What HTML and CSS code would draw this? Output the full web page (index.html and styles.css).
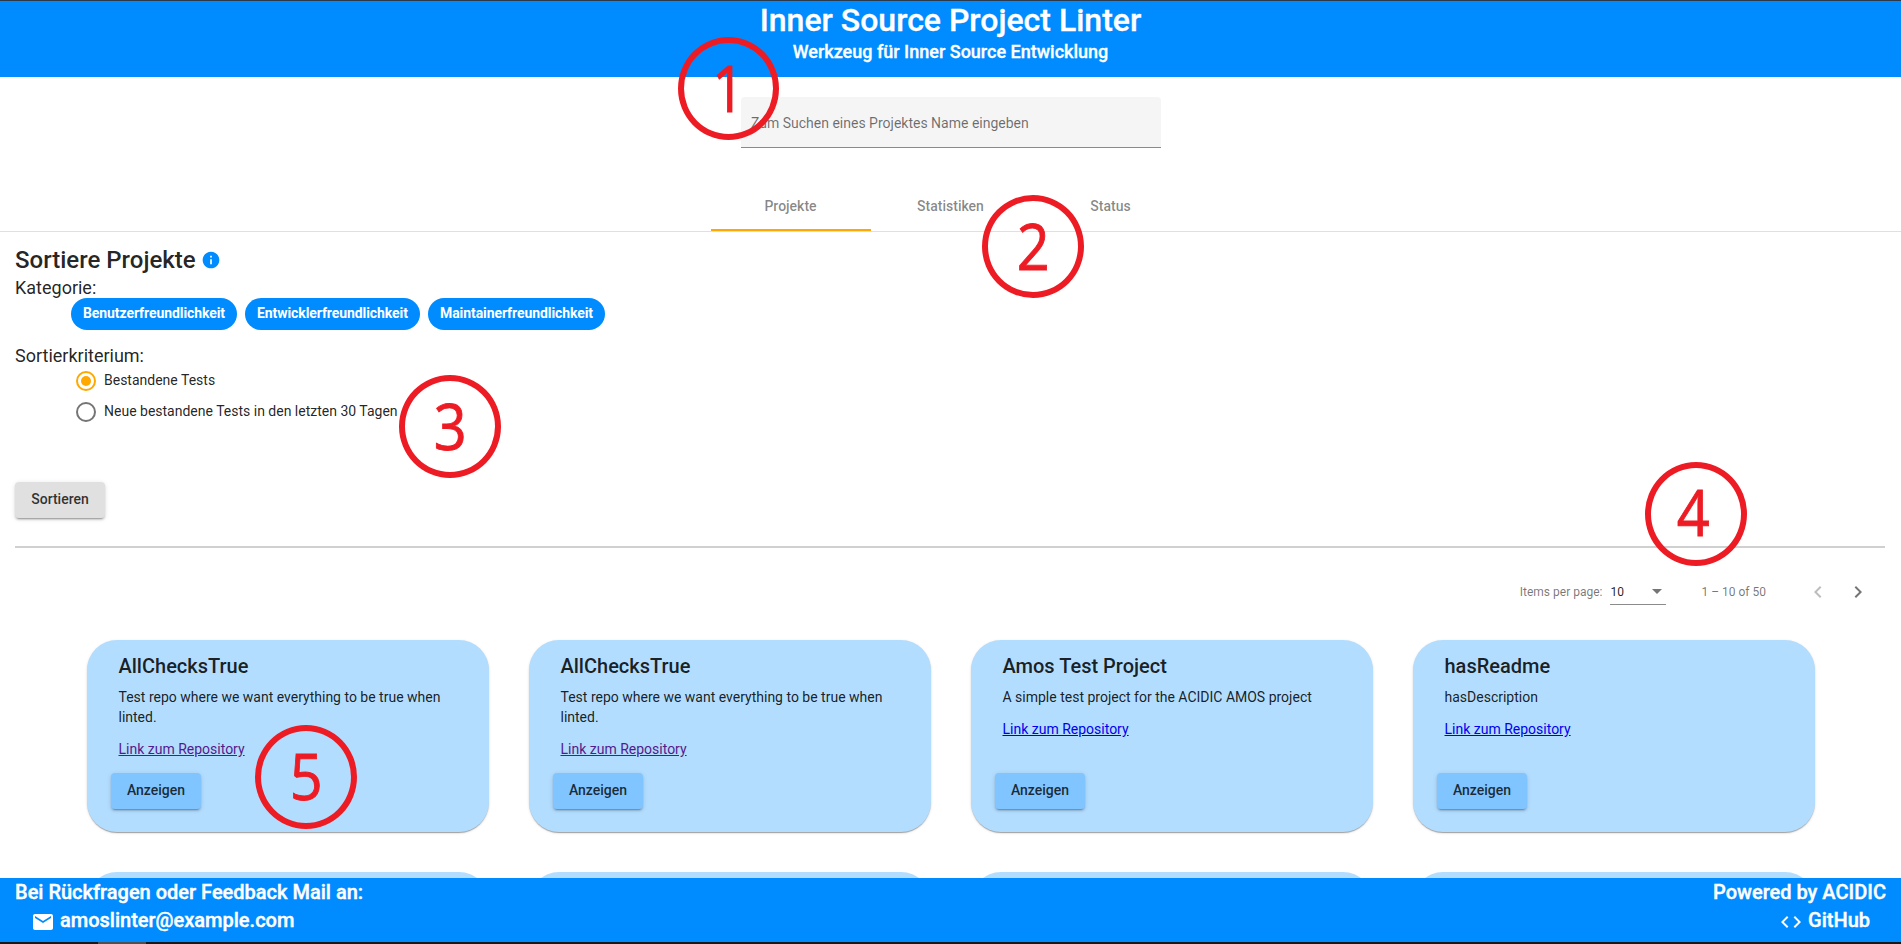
FILE: index.html
```html
<!DOCTYPE html>
<html lang="de">
<head>
<meta charset="utf-8">
<title>Inner Source Project Linter</title>
<link rel="stylesheet" href="styles.css">
</head>
<body>
<header class="header">
  <h1 class="title">Inner Source Project Linter</h1>
  <p class="subtitle">Werkzeug für Inner Source Entwicklung</p>
</header>
<div class="search"><span>Zum Suchen eines Projektes Name eingeben</span></div>
<nav class="tabs">
  <div class="tab active">Projekte</div>
  <div class="tab">Statistiken</div>
  <div class="tab">Status</div>
</nav>
<main class="main">
  <div class="heading"><h2>Sortiere Projekte</h2><svg class="info" viewBox="0 0 24 24"><path d="M12 2C6.480 2 2 6.480 2 12s4.480 10 10 10 10-4.480 10-10S17.520 2 12 2zm1 15h-2v-6h2v6zm0-8h-2V7h2v2z"/></svg></div>
  <p class="label">Kategorie:</p>
  <div class="chips">
    <span class="chip c1">Benutzerfreundlichkeit</span>
    <span class="chip c2">Entwicklerfreundlichkeit</span>
    <span class="chip c3">Maintainerfreundlichkeit</span>
  </div>
  <p class="label second">Sortierkriterium:</p>
  <div class="radios">
    <label class="radio"><span class="dot on"></span><span class="option">Bestandene Tests</span></label>
    <label class="radio"><span class="dot"></span><span class="option">Neue bestandene Tests in den letzten 30 Tagen</span></label>
  </div>
  <button class="btn sort">Sortieren</button>
  <div class="divider"></div>
  <div class="paginator">
    <span class="per">Items per page:</span>
    <div class="select"><span>10</span><i class="arrow"></i></div>
    <span class="range">1 – 10 of 50</span>
    <svg class="chev off" viewBox="0 0 24 24"><path d="M15.410 7.410L14 6l-6 6 6 6 1.410-1.410L10.830 12z"/></svg>
    <svg class="chev" viewBox="0 0 24 24"><path d="M10 6L8.590 7.410 13.170 12l-4.580 4.590L10 18l6-6z"/></svg>
  </div>
  <section class="grid">
    <article class="card"><h3>AllChecksTrue</h3><p>Test repo where we want everything to be true when linted.</p><a class="seen">Link zum Repository</a><button class="btn show">Anzeigen</button></article>
    <article class="card"><h3>AllChecksTrue</h3><p>Test repo where we want everything to be true when linted.</p><a class="seen">Link zum Repository</a><button class="btn show">Anzeigen</button></article>
    <article class="card"><h3>Amos Test Project</h3><p>A simple test project for the ACIDIC AMOS project</p><a>Link zum Repository</a><button class="btn show">Anzeigen</button></article>
    <article class="card"><h3>hasReadme</h3><p>hasDescription</p><a>Link zum Repository</a><button class="btn show">Anzeigen</button></article>
  </section>
  <section class="peek">
    <div class="edge"></div><div class="edge"></div><div class="edge"></div><div class="edge"></div>
  </section>
</main>
<footer class="footer">
  <div class="contact">
    <div>Bei Rückfragen oder Feedback Mail an:</div>
    <div class="mail"><svg viewBox="0 0 24 24"><path d="M20 4H4c-1.100 0-1.990.9-1.990 2L2 18c0 1.100.9 2 2 2h16c1.100 0 2-.9 2-2V6c0-1.100-.9-2-2-2zm0 4l-8 5-8-5V6l8 5 8-5v2z"/></svg><span>amoslinter@example.com</span></div>
  </div>
  <div class="powered">
    <div>Powered by ACIDIC</div>
    <div class="git"><svg viewBox="0 0 24 24"><path d="M9.400 16.600L4.800 12l4.600-4.600L8 6l-6 6 6 6 1.400-1.400zm5.200 0l4.600-4.600-4.600-4.600L16 6l6 6-6 6-1.400-1.400z"/></svg><span>GitHub</span></div>
  </div>
</footer>
<div class="taskbar"><i></i></div>
<div class="mark m1"><span>1</span></div>
<div class="mark m2"><span>2</span></div>
<div class="mark m3"><span>3</span></div>
<div class="mark m4"><span>4</span></div>
<div class="mark m5"><span>5</span></div>
</body>
</html>
```
FILE: styles.css
```css
* { box-sizing: border-box; margin: 0; padding: 0; }
html, body { height: 944px; overflow: hidden; }
body { display: flex; flex-direction: column; position: relative; background: #fff; color: rgba(0,0,0,.87); font: 14px/20px Roboto, sans-serif; }
.header { flex: none; height: 77px; border-top: 1px solid #2b3a4a; background: #008cff; color: #fff; text-align: center; -webkit-text-stroke: .3px #fff; }
.title { font-size: 32px; line-height: 38px; font-weight: 500; }
.subtitle { font-size: 18px; line-height: 26px; font-weight: 500; }
.search { flex: none; width: 420px; height: 51px; margin: 20px auto 0; padding: 16px 10px 0; background: #f5f5f5; border-bottom: 1px solid #8a8a8a; border-radius: 4px 4px 0 0; color: rgba(0,0,0,.56); }
.search span { margin-left: .5px; }
.tabs { flex: none; display: flex; justify-content: center; height: 49px; margin-top: 35px; border-bottom: 1px solid #e0e0e0; }
.tab { width: 160px; height: 48px; padding-top: 13px; text-align: center; font-weight: 500; color: rgba(0,0,0,.48); }
.active { border-bottom: 2px solid #ffa800; }
.main { flex: 1; min-height: 0; padding: 12px 16px 0 15px; }
.heading { display: flex; align-items: center; height: 32px; }
.heading h2 { font-size: 24px; line-height: 32px; font-weight: 500; }
.info { width: 20px; height: 20px; margin-left: 5px; fill: #008cff; }
.label { font-size: 18px; line-height: 24px; height: 22px; }
.chips { display: flex; gap: 8px; padding-left: 56px; }
.chip { height: 32px; border-radius: 16px; background: #008cff; color: #fff; padding-left: 12px; font-weight: 700; letter-spacing: -.08px; line-height: 31px; }
.c1 { width: 166px; } .c2 { width: 175px; } .c3 { width: 177px; }
.second { margin-top: 14px; }
.radios { padding: 5px 0 0 61px; }
.radio { display: flex; align-items: center; gap: 8px; height: 20px; margin-bottom: 11px; }
.option { margin-bottom: 2px; }
.dot { display: flex; width: 20px; height: 20px; border: 2px solid #757575; border-radius: 50%; }
.on { border-color: #ffa800; }
.on::before { content: ""; width: 10px; height: 10px; margin: 3px; border-radius: 50%; background: #ffa800; }
.btn { display: block; width: 90px; height: 36px; padding-bottom: 2px; border: 0; border-radius: 4px; font: 500 14px/34px Roboto, sans-serif; color: rgba(0,0,0,.8); background: #e0e0e0; box-shadow: 0 3px 1px -2px rgba(0,0,0,.2), 0 2px 2px rgba(0,0,0,.14), 0 1px 5px rgba(0,0,0,.12); }
.sort { margin-top: 60px; }
.divider { height: 2px; margin-top: 28px; background: #d0d0d0; }
.paginator { display: flex; justify-content: flex-end; align-items: center; height: 56px; margin-top: 16px; padding-right: 15px; font-size: 12px; color: rgba(0,0,0,.54); }
.select { display: flex; justify-content: space-between; align-items: center; width: 56px; height: 26px; margin: 0 35px 0 8px; padding-right: 4px; border-bottom: 1px solid #8c8c8c; color: rgba(0,0,0,.87); }
.arrow { border: 5px solid transparent; border-top-color: #757575; border-bottom: 0; }
.range { margin-right: 40px; }
.chev { width: 24px; height: 24px; fill: #757575; }
.off { fill: #bdbdbd; margin-right: 16px; }
.grid { display: grid; grid-template-columns: repeat(4, 402px); grid-auto-rows: 192px; gap: 40px; padding: 20px 0 0 72px; }
.card { display: flex; flex-direction: column; align-items: flex-start; padding: 10px 24px 23px; border-radius: 30px; background: #b2ddff; box-shadow: 0 2px 1px -1px rgba(0,0,0,.2), 0 1px 1px rgba(0,0,0,.14), 0 1px 3px rgba(0,0,0,.12); }
.card h3 { font-size: 20px; line-height: 32px; font-weight: 500; margin-left: 7.5px; }
.card p { margin: 5px 16px 12px 7.5px; }
.card a { margin-left: 7.5px; color: #0000ee; text-decoration: underline; }
.card .seen { color: #551a8b; }
.show { margin-top: auto; background: #80c5ff; }
/* top edge of the next card row, clipped by the footer */
.peek { display: grid; grid-template-columns: repeat(4, 402px); gap: 40px; height: 6px; margin: 40px 0 0 72px; overflow: hidden; }
.edge { height: 60px; border-radius: 30px; background: #b2ddff; }
.footer { flex: none; height: 64px; padding: 0 15px; display: flex; justify-content: space-between; background: #008cff; color: #fff; font-size: 20px; line-height: 28px; font-weight: 500; -webkit-text-stroke: .4px #fff; }
.mail, .git { display: flex; align-items: center; }
.mail { padding-left: 16px; }
.git { justify-content: flex-end; padding-right: 16px; }
.footer svg { width: 24px; height: 24px; margin: 3px 5px 0 0; fill: #fff; }
.taskbar { flex: none; height: 2px; padding-left: 98px; background: #181818; }
.taskbar i { display: block; width: 48px; height: 2px; background: #505050; }
.mark { position: absolute; width: 102px; height: 103px; border: 6px solid #ed1c24; border-radius: 50%; color: #ed1c24; font: 400 64px/90px "Open Sans", sans-serif; text-align: center; -webkit-text-stroke: .9px #ed1c24; }
.mark span { display: inline-block; transform: scaleX(.9); }
.m1 { left: 678px; top: 37px; width: 101px; } .m2 { left: 982px; top: 195px; } .m3 { left: 399px; top: 375px; } .m4 { left: 1645px; top: 462px; height: 104px; padding-right: 5px; line-height: 88px; } .m5 { left: 255px; top: 725px; height: 104px; }
```
